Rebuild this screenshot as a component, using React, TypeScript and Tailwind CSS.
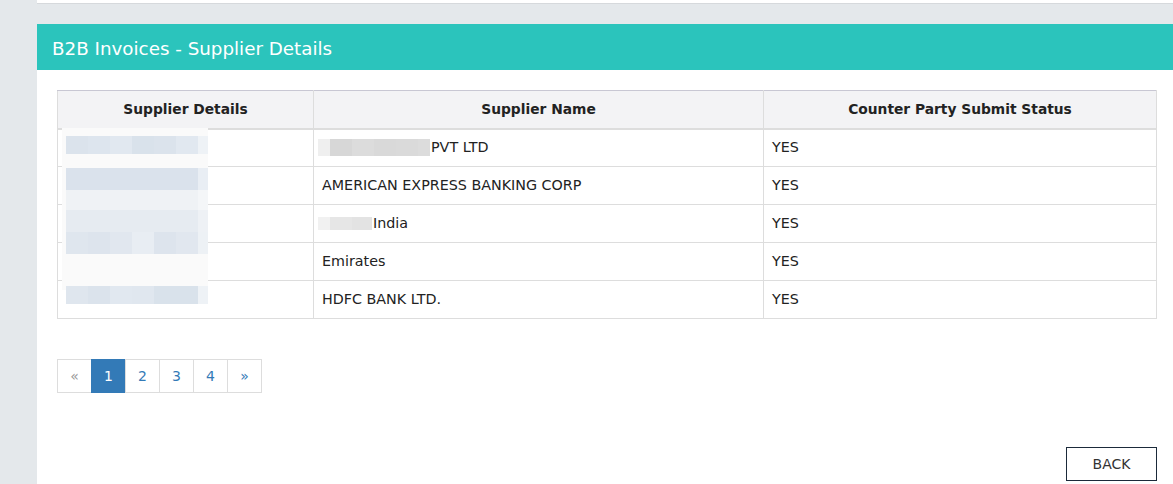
import React from "react";

const rows = [
  { name: "PVT LTD", redact: "pvt" },
  { name: "AMERICAN EXPRESS BANKING CORP" },
  { name: "India", redact: "india" },
  { name: "Emirates" },
  { name: "HDFC BANK LTD." },
];

export default function App() {
  return (
    <div
      className="flex w-[1173px] h-[484px] overflow-hidden bg-[#e4e8eb]"
      style={{ fontFamily: '"DejaVu Sans", Verdana, sans-serif' }}
    >
      <div className="w-[37px] shrink-0 bg-[#e4e8eb]" />
      <div className="flex-1 flex flex-col">
        <div className="h-[4px] bg-white border-b border-[#d6d9dc]" />
        <div className="h-[20px]" />
        <div className="flex-1 bg-white flex flex-col">
          <div className="h-[46px] bg-[#2bc4bc] flex items-center pl-[15px] pt-[3px]">
            <span className="text-white text-[18.3px] leading-[24px]">B2B Invoices - Supplier Details</span>
          </div>
          <div className="pl-[20px] pr-[16px] pt-[20px] flex flex-col">
            <div className="relative">
              <table className="w-full border-collapse text-[14.3px] leading-[19px] text-[#222]">
                <thead>
                  <tr className="bg-[#f3f3f5] h-[38px]">
                    <th className="w-[256px] border border-[#ddd] border-t-[#c8c7d3] border-b-2 font-bold text-center text-[13.8px]">Supplier Details</th>
                    <th className="w-[450px] border border-[#ddd] border-t-[#c8c7d3] border-b-2 font-bold text-center text-[13.8px]">Supplier Name</th>
                    <th className="border border-[#ddd] border-t-[#c8c7d3] border-b-2 font-bold text-center text-[13.8px]">Counter Party Submit Status</th>
                  </tr>
                </thead>
                <tbody>
                  {rows.map((r, i) => (
                    <tr key={i} className="h-[38px]">
                      <td className="border border-[#ddd] px-[8px]" />
                      <td className="border border-[#ddd] px-[8px] pb-[1px]">
                        <div className="flex items-center">
                          {r.redact === "pvt" && (
                            <div className="flex h-[17px] mr-[1px] -ml-[4px]">
                              <div className="w-[12px] bg-[#efefef]" />
                              <div className="w-[22px] bg-[#d7d7d7]" />
                              <div className="w-[22px] bg-[#dcdcdc]" />
                              <div className="w-[22px] bg-[#d9d9d9]" />
                              <div className="w-[22px] bg-[#dadada]" />
                              <div className="w-[12px] bg-[#dcdcdc]" />
                            </div>
                          )}
                          {r.redact === "india" && (
                            <div className="flex h-[13px] -ml-[4px] mr-[1px]">
                              <div className="w-[12px] bg-[#f1f1f1]" />
                              <div className="w-[22px] bg-[#e6e6e6]" />
                              <div className="w-[20px] bg-[#e3e3e3]" />
                            </div>
                          )}
                          <span>{r.name}</span>
                        </div>
                      </td>
                      <td className="border border-[#ddd] px-[8px] pb-[1px]">YES</td>
                    </tr>
                  ))}
                </tbody>
              </table>
              <div className="absolute left-[5px] top-[38px] w-[146px] h-[162px] bg-[#fafafa] flex flex-col">
                <div className="h-[8px]" />
                <div className="ml-[4px] flex h-[18px]">
                  <div className="w-[22px] bg-[#dbe3ec]" />
                  <div className="w-[22px] bg-[#dde5ee]" />
                  <div className="w-[22px] bg-[#e1e8f0]" />
                  <div className="w-[22px] bg-[#d9e2eb]" />
                  <div className="w-[22px] bg-[#dbe3ec]" />
                  <div className="w-[22px] bg-[#e1e8f0]" />
                  <div className="w-[10px] bg-[#eef2f6]" />
                </div>
                <div className="h-[14px]" />
                <div className="ml-[4px] flex h-[22px]">
                  <div className="w-[132px] bg-[#dae2ec]" />
                  <div className="w-[10px] bg-[#e9eef4]" />
                </div>
                <div className="ml-[4px] flex h-[20px]">
                  <div className="w-[132px] bg-[#eff2f5]" />
                  <div className="w-[10px] bg-[#f4f6f8]" />
                </div>
                <div className="ml-[4px] flex h-[22px]">
                  <div className="w-[132px] bg-[#e6ebf1]" />
                  <div className="w-[10px] bg-[#eef1f5]" />
                </div>
                <div className="ml-[4px] flex h-[22px]">
                  <div className="w-[22px] bg-[#dfe6ee]" />
                  <div className="w-[22px] bg-[#dde4ed]" />
                  <div className="w-[22px] bg-[#e1e7ef]" />
                  <div className="w-[22px] bg-[#e8edf3]" />
                  <div className="w-[22px] bg-[#dde4ed]" />
                  <div className="w-[22px] bg-[#e1e7ef]" />
                  <div className="w-[10px] bg-[#edf1f5]" />
                </div>
              </div>
              <div className="absolute left-[9px] top-[196px] flex h-[18px]">
                <div className="w-[22px] bg-[#dfe6ee]" />
                <div className="w-[22px] bg-[#dbe3ec]" />
                <div className="w-[22px] bg-[#e1e8f0]" />
                <div className="w-[22px] bg-[#e0e7ef]" />
                <div className="w-[44px] bg-[#d9e2eb]" />
                <div className="w-[10px] bg-[#eef2f6]" />
              </div>
            </div>
            <div className="mt-[40px] flex text-[14px]">
              <div className="w-[35px] h-[34px] border border-[#ddd] flex items-center justify-center text-[#999]">«</div>
              <div className="w-[35px] h-[34px] bg-[#337ab7] border border-[#337ab7] -ml-px flex items-center justify-center text-white">1</div>
              {["2", "3", "4", "»"].map((p) => (
                <div key={p} className="w-[35px] h-[34px] border border-[#ddd] -ml-px flex items-center justify-center text-[#337ab7]">{p}</div>
              ))}
            </div>
            <div className="mt-[54px] flex justify-end">
              <button className="w-[91px] h-[34px] border-[1.5px] border-[#1b2a3a] text-[14px] leading-[20px] text-[#333] bg-white">BACK</button>
            </div>
          </div>
        </div>
      </div>
    </div>
  );
}
